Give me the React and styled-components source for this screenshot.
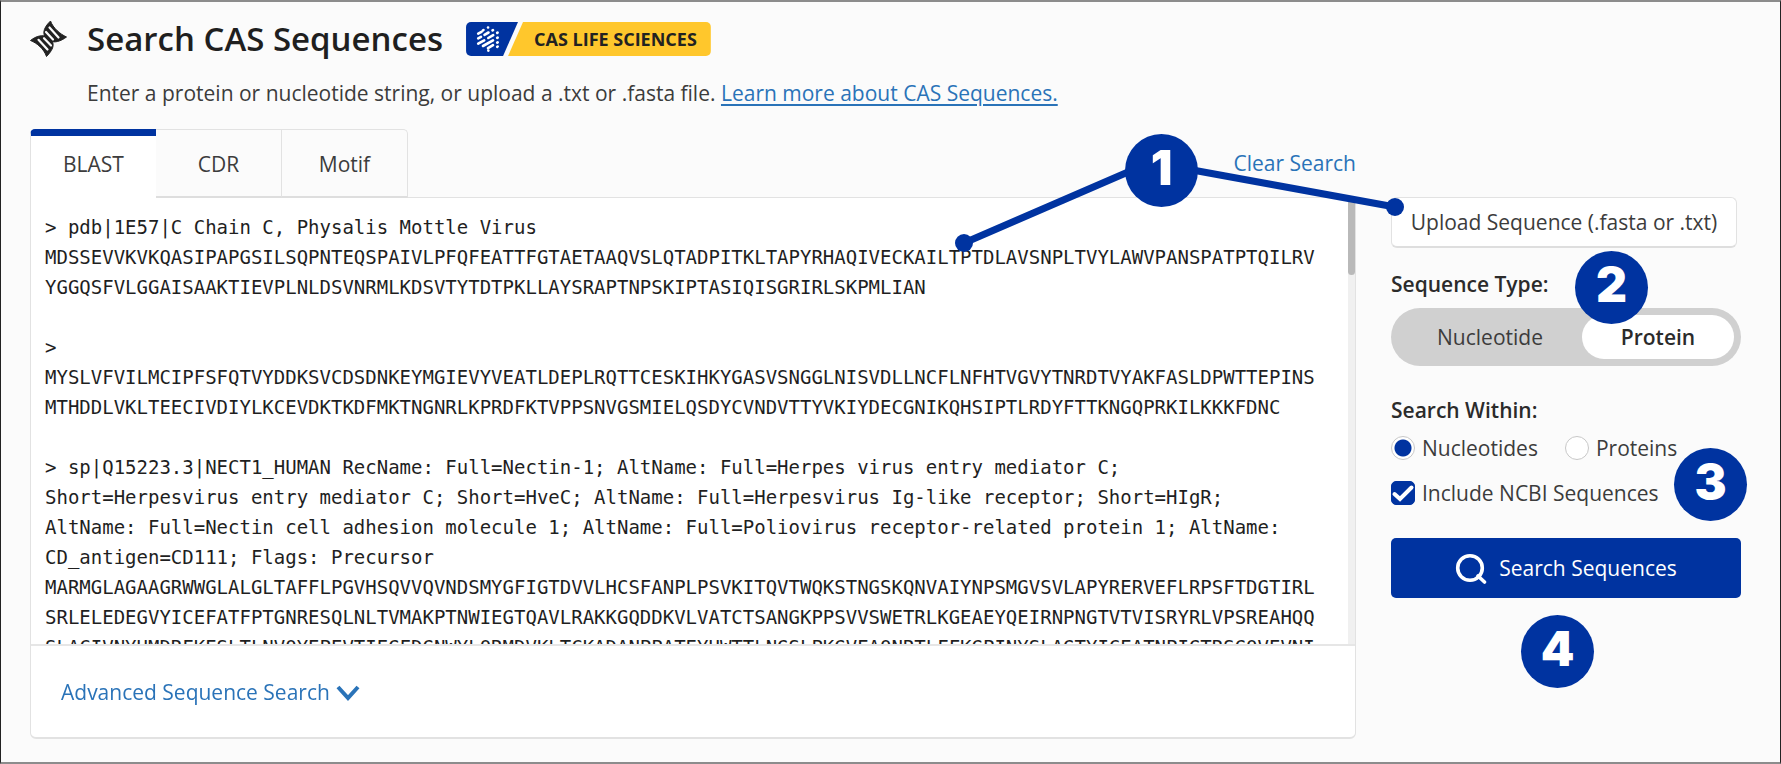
import React from "react";
import styled, { createGlobalStyle } from "styled-components";

const GlobalStyle = createGlobalStyle`
  * {
    box-sizing: border-box;
  }
  body {
    margin: 0;
    background: #fbfbfb;
    color: #3c3c3c;
    font-family: "Open Sans", "Noto Sans", sans-serif;
    font-size: 21px;
    line-height: 28px;
  }
  button, input, textarea {
    font: inherit;
    color: inherit;
  }
`;

const Page = styled.div`
  position: relative;
  min-height: 100vh;
  padding: 15px 39px 20px 29px;
  border: 1px solid #222;
  border-top: 2px solid #8c8c8c;
  border-bottom: 2px solid #8c8c8c;
`;

const Header = styled.header`
  display: flex;
  align-items: center;
  height: 44px;
`;

const Title = styled.h1`
  margin: 0 23px 0 20px;
  color: #1f1f1f;
  font-size: 33px;
  font-weight: 600;
  line-height: 44px;
`;

const Badge = styled.div`
  display: flex;
  height: 34px;
  border-radius: 5px;
  overflow: hidden;
`;

const BadgeLogo = styled.span`
  width: 52px;
  padding: 4px 0 0 10px;
  background: #0033a0;
  clip-path: polygon(0 0, 100% 0, 37px 100%, 0 100%);
`;

const BadgeText = styled.span`
  margin-left: -10px;
  padding: 0 14px 0 26px;
  background: #ffc72c;
  clip-path: polygon(15px 0, 100% 0, 100% 100%, 0 100%);
  color: #222;
  font-size: 18px;
  font-weight: 700;
  line-height: 35px;
`;

const Intro = styled.p`
  margin: 18px 0 22px 57px;
`;

const IntroLink = styled.a`
  color: #2a73b8;
  text-decoration: underline;
  text-decoration-thickness: 2px;
  text-underline-offset: 3px;
`;

const Main = styled.main`
  display: flex;
  gap: 35px;
`;

const SearchColumn = styled.section`
  flex: 1;
  min-width: 0;
`;

const TabRow = styled.div`
  display: flex;
  align-items: center;
  justify-content: space-between;
`;

const Tabs = styled.div`
  display: flex;
  margin-bottom: -1px;
`;

const Tab = styled.button`
  width: 126px;
  height: 69px;
  padding: ${(props) => (props.$active ? "0 0 6px" : "2px 0 0")};
  background: ${(props) => (props.$active ? "#fff" : "#fbfbfb")};
  border: 1px solid #e2e2e2;
  border-left-width: ${(props) => (props.$active ? "1px" : "0")};
  border-top: ${(props) => (props.$active ? "7px solid #0033a0" : "1px solid #e2e2e2")};
  border-bottom: ${(props) => (props.$active ? "0" : "2px solid #dedede")};
  cursor: pointer;
  &:first-child {
    border-top-left-radius: 5px;
    border-right: 0;
  }
  &:last-child {
    border-top-right-radius: 5px;
  }
`;

const TextButton = styled.button`
  display: flex;
  align-items: center;
  gap: 6px;
  padding: 0;
  background: none;
  border: 0;
  color: #2a73b8;
  cursor: pointer;
`;

const Panel = styled.div`
  background: #fff;
  border: 1px solid #e2e2e2;
  border-bottom-width: 2px;
  border-radius: 0 0 6px 6px;
`;

const SequenceArea = styled.div`
  display: flex;
  height: 448px;
  border-bottom: 2px solid #e6e6e6;
`;

const SequenceBox = styled.textarea`
  flex: 1;
  min-width: 0;
  padding: 14px 14px 0;
  background: #fff;
  border: 0;
  outline: none;
  resize: none;
  overflow-y: auto;
  scrollbar-width: none;
  color: #1f1f1f;
  font-family: "DejaVu Sans Mono", monospace;
  font-size: 19px;
  line-height: 30px;
`;

const ScrollTrack = styled.div`
  width: 7px;
  background: #f0f0f0;
`;

const ScrollThumb = styled.div`
  height: 77px;
  background: #b9b9b9;
  border-radius: 4px;
`;

const PanelFooter = styled.div`
  padding: 32px 30px 31px;
`;

const Options = styled.aside`
  width: 350px;
  margin-top: 68px;
`;

const UploadButton = styled.button`
  display: block;
  width: calc(100% - 4px);
  height: 51px;
  padding: 0;
  background: #fff;
  border: 1px solid #e2e2e2;
  border-bottom: 2px solid #dedede;
  border-radius: 6px;
  cursor: pointer;
`;

const Group = styled.fieldset`
  margin: 0;
  padding: 0;
  border: 0;
`;

const GroupTitle = styled.legend`
  padding: 22px 0 10px;
  color: #2b2b2b;
  font-weight: 600;
`;

const Toggle = styled.div`
  display: flex;
  height: 58px;
  margin-bottom: 8px;
  padding: 7px;
  background: #d0d0d0;
  border-radius: 29px;
`;

const ToggleOption = styled.label`
  flex: ${(props) => (props.$wide ? "1" : "0 0 152px")};
  border-radius: 22px;
  line-height: 44px;
  text-align: center;
  cursor: pointer;
  input {
    position: absolute;
    opacity: 0;
  }
  &:has(input:checked) {
    background: #fff;
    color: #2b2b2b;
    font-weight: 600;
  }
`;

const RadioRow = styled.div`
  display: flex;
  gap: 27px;
`;

const Choice = styled.label`
  display: flex;
  align-items: center;
  gap: 7px;
  cursor: pointer;
`;

const Radio = styled.input`
  appearance: none;
  width: 24px;
  height: 24px;
  margin: 0;
  background: #fff;
  border: 1px solid #c8c8c8;
  border-radius: 50%;
  &:checked {
    background: radial-gradient(circle, #0033a0 8px, #fff 9px);
  }
`;

const CheckRow = styled.div`
  margin: 17px 0 31px;
`;

const Checkbox = styled.input`
  appearance: none;
  width: 24px;
  height: 24px;
  margin: 0;
  border: 1px solid #0033a0;
  border-radius: 5px;
  &:checked {
    background: #0033a0;
  }
`;

const CheckSlot = styled.span`
  display: grid;
  > * {
    grid-area: 1 / 1;
  }
  svg {
    pointer-events: none;
    z-index: 1;
  }
`;

const SearchButton = styled.button`
  display: flex;
  align-items: center;
  justify-content: center;
  gap: 12px;
  width: 100%;
  height: 60px;
  background: #0033a0;
  border: 0;
  border-radius: 5px;
  color: #fff;
  font-weight: 500;
  cursor: pointer;
`;

/* numbered callouts lie over the form */
const Marker = styled.span`
  position: absolute;
  top: ${(props) => props.$top}px;
  right: ${(props) => props.$right}px;
  width: 73px;
  height: 73px;
  background: #0033a0;
  border-radius: 50%;
  color: #fff;
  font-family: Inter, sans-serif;
  font-size: 48px;
  font-weight: 900;
  line-height: 68px;
  text-align: center;
`;

const Leaders = styled.svg`
  position: absolute;
  top: 157px;
  right: 375px;
  pointer-events: none;
`;

const sequences = `> pdb|1E57|C Chain C, Physalis Mottle Virus
MDSSEVVKVKQASIPAPGSILSQPNTEQSPAIVLPFQFEATTFGTAETAAQVSLQTADPITKLTAPYRHAQIVECKAILTPTDLAVSNPLTVYLAWVPANSPATPTQILRV
YGGQSFVLGGAISAAKTIEVPLNLDSVNRMLKDSVTYTDTPKLLAYSRAPTNPSKIPTASIQISGRIRLSKPMLIAN

>
MYSLVFVILMCIPFSFQTVYDDKSVCDSDNKEYMGIEVYVEATLDEPLRQTTCESKIHKYGASVSNGGLNISVDLLNCFLNFHTVGVYTNRDTVYAKFASLDPWTTEPINS
MTHDDLVKLTEECIVDIYLKCEVDKTKDFMKTNGNRLKPRDFKTVPPSNVGSMIELQSDYCVNDVTTYVKIYDECGNIKQHSIPTLRDYFTTKNGQPRKILKKKFDNC

> sp|Q15223.3|NECT1_HUMAN RecName: Full=Nectin-1; AltName: Full=Herpes virus entry mediator C;
Short=Herpesvirus entry mediator C; Short=HveC; AltName: Full=Herpesvirus Ig-like receptor; Short=HIgR;
AltName: Full=Nectin cell adhesion molecule 1; AltName: Full=Poliovirus receptor-related protein 1; AltName:
CD_antigen=CD111; Flags: Precursor
MARMGLAGAAGRWWGLALGLTAFFLPGVHSQVVQVNDSMYGFIGTDVVLHCSFANPLPSVKITQVTWQKSTNGSKQNVAIYNPSMGVSVLAPYRERVEFLRPSFTDGTIRL
SRLELEDEGVYICEFATFPTGNRESQLNLTVMAKPTNWIEGTQAVLRAKKGQDDKVLVATCTSANGKPPSVVSWETRLKGEAEYQEIRNPNGTVTVISRYRLVPSREAHQQ
SLACIVNYHMDRFKESLTLNVQYEPEVTIEGFDGNWYLQRMDVKLTCKADANPPATEYHWTTLNGSLPKGVEAQNRTLFFKGPINYSLAGTYICEATNPIGTRSGQVEVNI`;

const markers = [
  { label: "1", top: 132, right: 582 },
  { label: "2", top: 249, right: 132 },
  { label: "3", top: 446, right: 33 },
  { label: "4", top: 613, right: 186 },
];

const DnaIcon = () => (
  <svg width="37" height="38" viewBox="0 0 37 38" fill="none">
    <g fill="#222" stroke="#222" strokeWidth="1" strokeLinejoin="round">
      <path d="M20.5 1C12 9 12 16 18.5 20C24 24 31 21 36.5 17C30 14 23 8 20.5 1Z" />
      <path d="M16.5 36.5C25 28 25 22 18.5 17.5C13 14 6 16 .5 20.5C7 23 14 29 16.5 36.5Z" />
    </g>
    <path
      d="M19.5 7.5L28.5 17.5M16 12L23 19.5M17.5 29.5L8.5 19.8M21 25.5L14 18.2"
      stroke="#fbfbfb"
      strokeWidth="2.2"
      strokeLinecap="round"
    />
  </svg>
);

const CasLogo = () => (
  <svg width="24" height="26" viewBox="0 0 24 26" fill="none" stroke="#fff" strokeWidth="2.6" strokeLinecap="round">
    <path d="M12 1.5h.1M7.5 4L7 4.3M2.2 7.6L5.5 5.8M17 4.1L16.5 4.4M12.5 6.5L8.5 8.8M2.2 12.4L5 10.8M21.6 6.6L21.2 6.9M17.2 9.1L12.3 12M8.2 14.3L2.2 17.6M21.7 11.6L21.2 11.9M17 14.3L7 20M21.7 16.4L21.2 16.7M17 19.2L12 22.1M21.7 20.5L21.2 20.8M12.3 24.6h.1" />
  </svg>
);

export default class App extends React.Component {
  constructor(props) {
    super(props);
    this.state = {
      tab: "BLAST",
      query: sequences,
      sequenceType: "Protein",
      within: "Nucleotides",
      includeNcbi: true,
    };
  }

  render() {
    const { tab, query, sequenceType, within, includeNcbi } = this.state;
    return (
      <Page>
        <GlobalStyle />
        <Header>
          <DnaIcon />
          <Title>Search CAS Sequences</Title>
          <Badge>
            <BadgeLogo>
              <CasLogo />
            </BadgeLogo>
            <BadgeText>CAS LIFE SCIENCES</BadgeText>
          </Badge>
        </Header>
        <Intro>
          Enter a protein or nucleotide string, or upload a .txt or .fasta file.{" "}
          <IntroLink href="#learn">Learn more about CAS Sequences.</IntroLink>
        </Intro>

        <Main>
          <SearchColumn>
            <TabRow>
              <Tabs role="tablist">
                {["BLAST", "CDR", "Motif"].map((name) => (
                  <Tab
                    key={name}
                    role="tab"
                    aria-selected={tab === name}
                    $active={tab === name}
                    onClick={() => this.setState({ tab: name })}
                  >
                    {name}
                  </Tab>
                ))}
              </Tabs>
              <TextButton onClick={() => this.setState({ query: "" })}>Clear Search</TextButton>
            </TabRow>
            <Panel>
              <SequenceArea>
                <SequenceBox
                  aria-label="Sequence"
                  spellCheck={false}
                  value={query}
                  onChange={(e) => this.setState({ query: e.target.value })}
                />
                <ScrollTrack>
                  <ScrollThumb />
                </ScrollTrack>
              </SequenceArea>
              <PanelFooter>
                <TextButton>
                  Advanced Sequence Search
                  <svg width="24" height="18" viewBox="0 0 24 18" fill="none" stroke="#2a73b8" strokeWidth="4">
                    <path d="M2 4L12 15L22 4" />
                  </svg>
                </TextButton>
              </PanelFooter>
            </Panel>
          </SearchColumn>

          <Options>
            <UploadButton>Upload Sequence (.fasta or .txt)</UploadButton>
            <Group>
              <GroupTitle>Sequence Type:</GroupTitle>
              <Toggle>
                {["Nucleotide", "Protein"].map((name) => (
                  <ToggleOption key={name} $wide={name === "Nucleotide"}>
                    <input
                      type="radio"
                      name="sequenceType"
                      checked={sequenceType === name}
                      onChange={() => this.setState({ sequenceType: name })}
                    />
                    {name}
                  </ToggleOption>
                ))}
              </Toggle>
            </Group>
            <Group>
              <GroupTitle>Search Within:</GroupTitle>
              <RadioRow>
                {["Nucleotides", "Proteins"].map((name) => (
                  <Choice key={name}>
                    <Radio
                      type="radio"
                      name="within"
                      checked={within === name}
                      onChange={() => this.setState({ within: name })}
                    />
                    {name}
                  </Choice>
                ))}
              </RadioRow>
            </Group>
            <CheckRow>
              <Choice>
                <CheckSlot>
                  <Checkbox
                    type="checkbox"
                    checked={includeNcbi}
                    onChange={(e) => this.setState({ includeNcbi: e.target.checked })}
                  />
                  <svg width="24" height="24" viewBox="0 0 24 24" fill="none" stroke="#fff" strokeWidth="4" strokeLinecap="round">
                    <path d="M3.5 13L9 18L20.5 6.5" />
                  </svg>
                </CheckSlot>
                Include NCBI Sequences
              </Choice>
            </CheckRow>
            <SearchButton>
              <svg width="32" height="32" viewBox="0 0 32 32" fill="none" stroke="#fff" strokeWidth="3.6" strokeLinecap="round">
                <circle cx="15" cy="16" r="12.3" />
                <path d="M23 24L29.5 30" />
              </svg>
              Search Sequences
            </SearchButton>
          </Options>
        </Main>

        <Leaders width="450" height="100" viewBox="0 0 450 100" fill="#0033a0">
          <path d="M9 84L180 10M232 10L440 48" stroke="#0033a0" strokeWidth="7" />
          <circle cx="9" cy="84" r="9" />
          <circle cx="440" cy="48" r="9" />
        </Leaders>
        {markers.map((val) => (
          <Marker key={val.label} $top={val.top} $right={val.right}>
            {val.label}
          </Marker>
        ))}
      </Page>
    );
  }
}
